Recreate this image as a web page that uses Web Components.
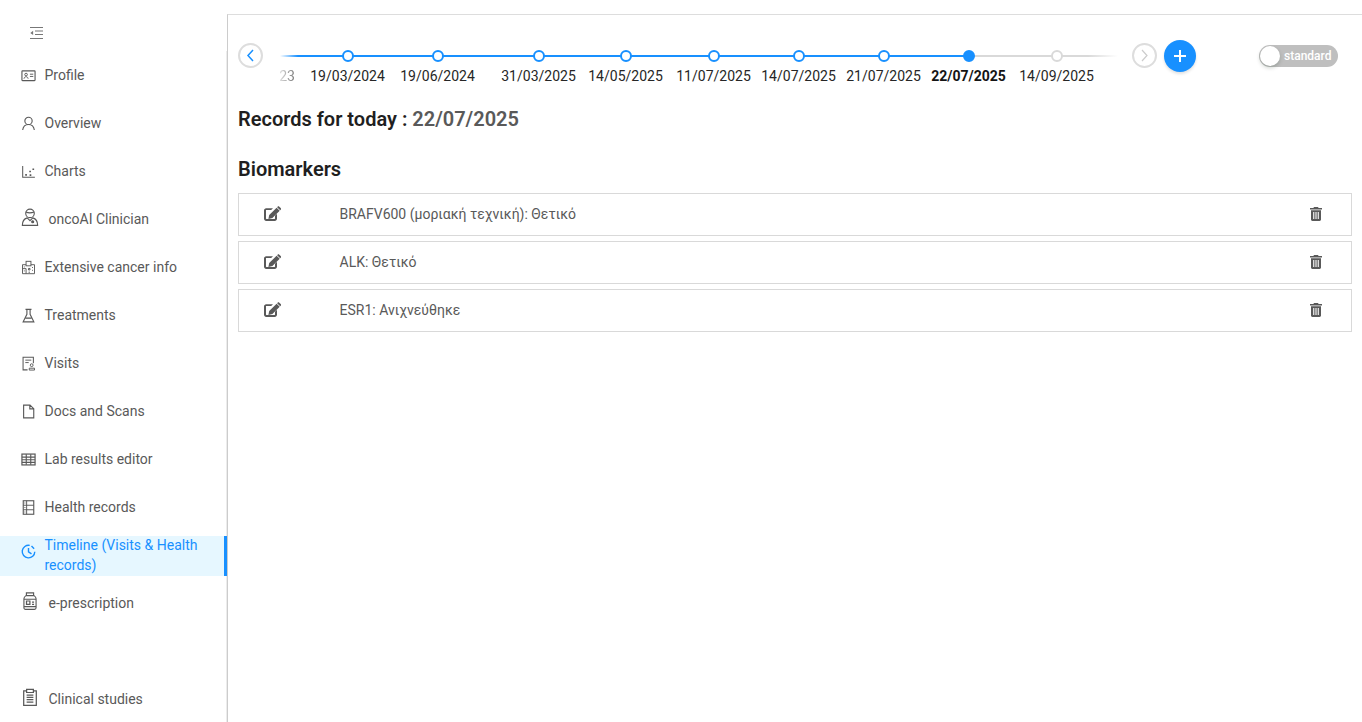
<!DOCTYPE html>
<html>
<head>
<meta charset="utf-8">
<title>Timeline</title>
<style>
  html, body { margin: 0; height: 100%; background: #fff; font-family: Roboto, "Noto Sans", sans-serif; }
</style>
</head>
<body>
<app-shell>
  <side-nav slot="side">
    <nav-item icon="profile" label="Profile"></nav-item>
    <nav-item icon="user" label="Overview"></nav-item>
    <nav-item icon="chart" label="Charts"></nav-item>
    <nav-item icon="doctor" label="oncoAI Clinician" wide></nav-item>
    <nav-item icon="cancer" label="Extensive cancer info"></nav-item>
    <nav-item icon="flask" label="Treatments"></nav-item>
    <nav-item icon="visit" label="Visits"></nav-item>
    <nav-item icon="file" label="Docs and Scans"></nav-item>
    <nav-item icon="table" label="Lab results editor"></nav-item>
    <nav-item icon="records" label="Health records"></nav-item>
    <nav-item icon="clock" label="Timeline (Visits &amp; Health records)" active></nav-item>
    <nav-item icon="jar" label="e-prescription" wide></nav-item>
    <nav-item icon="clip" label="Clinical studies" wide class="gap"></nav-item>
  </side-nav>
  <date-timeline>
    <time-stop date="23" kind="cut"></time-stop>
    <time-stop date="19/03/2024" left="16"></time-stop>
    <time-stop date="19/06/2024" left="15"></time-stop>
    <time-stop date="31/03/2025" left="26"></time-stop>
    <time-stop date="14/05/2025" left="12"></time-stop>
    <time-stop date="11/07/2025" left="13"></time-stop>
    <time-stop date="14/07/2025" left="10"></time-stop>
    <time-stop date="21/07/2025" left="10"></time-stop>
    <time-stop date="22/07/2025" left="10" kind="current"></time-stop>
    <time-stop date="14/09/2025" left="13" kind="future"></time-stop>
  </date-timeline>
  <records-head date="22/07/2025"></records-head>
  <section-title>Biomarkers</section-title>
  <record-row>BRAFV600 (μοριακή τεχνική): Θετικό</record-row>
  <record-row>ALK: Θετικό</record-row>
  <record-row>ESR1: Ανιχνεύθηκε</record-row>
</app-shell>

<script>
// all the sidebar icons, 16x16 box
const ICONS = {
  profile: '<rect x="1" y="3" width="14" height="10.5" rx=".6" stroke-width="1.2"/><circle cx="5.4" cy="7" r="1.4"/><path d="M3.200 11.400c.3-1.500 1.200-2.100 2.200-2.100s1.900.6 2.200 2.100M9.500 6.600h3.600M9.500 9h3.600"/>',
  user: '<circle cx="8" cy="5.200" r="3.900" stroke-width="1.200"/><path stroke-width="1.200" d="M1.800 15c.4-3.600 3-6 6.200-6s5.800 2.400 6.200 6"/>',
  chart: '<path d="M1.800 2v12.200h13" stroke-width="1.100"/><path stroke-width="1.800" stroke-dasharray="1.800 2.400" d="M4.500 11.600h3M9.200 11.800h3.200M8.800 8h1.800M12.200 5.600h1.800"/>',
  doctor: '<circle cx="8" cy="4.800" r="3.800"/><path d="M4.300 3.600c2.200 1 5 .9 7.400 0M1.200 15.400c0-3.800 1.800-5.800 4.300-6.600l2.500 2.500 2.500-2.500c2.500.8 4.300 2.800 4.300 6.600z"/><circle cx="10.400" cy="12.200" r=".9" fill="currentColor"/>',
  cancer: '<path d="M5.400 5H1.600v9.600h12.800V5H10.600"/><rect x="5.400" y="1.400" width="5.200" height="4.800"/><path d="M5.400 14.600V9.200H1.600M3 11.600h1M3 7.400h1M8 9h1.600v1.600H8zM11.800 8h1M11.800 11h1M8 13h1.600"/>',
  flask: '<path stroke-width="1.200" d="M4.800 1.500h6.400M6.300 1.500v5.200L2.300 14.800h11.400L9.700 6.700V1.500"/><path stroke-width="1.400" d="M4.600 10.800h6.800"/>',
  visit: '<path stroke-width="1.100" d="M7 14.800H2.200V1.400h11v6.200"/><path d="M4.600 4.400h6.400M4.600 7h3.600"/><circle cx="11.400" cy="9.800" r="1.500"/><path d="M8.800 15v-2h5.600v2z"/>',
  file: '<path stroke-width="1.200" d="M2.800 1.200h6.800L13.600 5v9.800H2.800zM9.400 1.400v3.800h4"/>',
  table: '<rect x="1" y="2.200" width="14" height="11.600" stroke-width="1.300"/><path stroke-width="1.200" d="M1 5.400h14M1 8.200h14M1 11h14M5.600 2.400v11.200M10.400 2.400v11.200"/>',
  records: '<rect x="2.400" y=".8" width="11.200" height="14.400" stroke-width="1.200"/><path stroke-width="1" d="M2.400 5.600h11.200M2.400 10.400h11.200M6 .8v14.400"/><path stroke-width="1.200" d="M3.700 3.200h1M3.700 8h1M3.700 12.800h1"/>',
  clock: '<path stroke-width="1.500" d="M9.300 1.500A6.700 6.700 0 1 0 14.700 8.200"/><path stroke-width="1.500" d="M8 4.200V8.400l3.200 2.200M11.200 2.200l2.800 2.800"/>',
  jar: '<path d="M4.800 .8h6.400v2.400H4.800zM4.400 3.200h7.200c1.100.7 1.800 1.700 1.800 2.800v8c0 .8-.6 1.400-1.400 1.400H4c-.8 0-1.400-.6-1.400-1.400V6c0-1.100.7-2.100 1.800-2.800zM2.600 6.400h10.800M2.600 13h10.800"/><path stroke-width="1.100" d="M4.900 8h3v3h-3zM9.800 9h1.800M9.800 11h1.800"/>',
  clip: '<path stroke-width="1.100" d="M5 2.600H2.400V15.400H13.600V2.600H11"/><path stroke-width="1.100" d="M5 1.200h6v2.800H5zM5 6.400h6M5 8.400h6M5 10.400h6M5 12.600h6"/>'
};

class AppShell extends HTMLElement {
  constructor() {
    super();
    this.attachShadow({ mode: 'open' }).innerHTML = `
      <style>
        :host { display: grid; grid-template-columns: 227px 1fr; height: 722px; overflow: hidden; }
        main { margin-top: 14px; border-top: 1px solid #ddd; border-left: 1px solid #ccc; padding: 25px 10px 0; min-width: 0; }
      </style>
      <slot name="side"></slot>
      <main><slot></slot></main>`;
  }
}

class SideNav extends HTMLElement {
  constructor() {
    super();
    this.attachShadow({ mode: 'open' }).innerHTML = `
      <style>
        /* faint edge of the menu, it only starts below the fold button */
        :host { display: flex; flex-direction: column; background: linear-gradient(#ececec, #ececec) right 51px / 1px 100% no-repeat; }
        .fold { height: 55px; padding: 26px 0 0 29px; box-sizing: border-box; color: #777; }
        .fold svg { display: block; width: 15px; height: 14px; }
      </style>
      <div class="fold">
        <svg viewBox="0 0 14 14" fill="none" stroke="currentColor" stroke-width="1.200">
          <path d="M.5 1.500h13M5.500 5h8M5.500 8.500h8M.5 12.500h13"/>
          <path d="M3.600 4.800v4.200L.8 7z" fill="currentColor" stroke="none"/>
        </svg>
      </div>
      <slot></slot>`;
  }
}

class NavItem extends HTMLElement {
  constructor() {
    super();
    this.attachShadow({ mode: 'open' }).innerHTML = `
      <style>
        :host { display: flex; align-items: center; height: 40px; margin-bottom: 8px; padding: 0 24px 0 21px; box-sizing: border-box;
                font: 14px/20px Roboto, sans-serif; color: #595959; }
        :host([active]) { background: #e6f7ff; color: #1890ff; border-right: 3px solid #1890ff; margin: 1px 0 7px; padding-right: 21px; }
        :host([active]) span { margin-top: -2px; }
        :host(.gap) { margin-top: 48px; }
        svg { flex: none; width: 15px; height: 15px; margin-right: 8.500px; }
        :host([wide]) svg { width: 18px; height: 18px; margin-right: 9.500px; margin-top: -4px; }
        :host([active]) svg { margin-top: -9px; }
      </style>
      <svg viewBox="0 0 16 16" fill="none" stroke="currentColor" stroke-width="1"></svg>
      <span></span>`;
  }
  connectedCallback() {
    this.shadowRoot.querySelector('svg').innerHTML = ICONS[this.getAttribute('icon')] || '';
    this.shadowRoot.querySelector('span').textContent = this.getAttribute('label');
  }
}

class DateTimeline extends HTMLElement {
  constructor() {
    super();
    this.attachShadow({ mode: 'open' }).innerHTML = `
      <style>
        :host { display: flex; align-items: flex-start; height: 64px; }
        .arrow { flex: none; width: 25px; height: 25px; box-sizing: border-box; border: 2px solid #ddd; border-radius: 50%; margin-top: 3px; display: flex; align-items: center; justify-content: center; color: #1890ff; }
        .arrow.off { color: #ccc; margin-left: 14px; }
        .arrow svg { width: 9px; height: 13px; }
        .track { position: relative; flex: none; width: 838px; margin-left: 17px; display: flex; overflow: hidden; }
        /* line sits under the dots */
        .line { position: absolute; left: 0; right: 0; top: 15px; height: 2px;
                background: linear-gradient(90deg, rgba(24,144,255,0) 0, #1890ff 18px, #1890ff 689px, #d9d9d9 689px, #d9d9d9 808px, rgba(217,217,217,0) 838px); }
        .add { flex: none; width: 32px; height: 32px; border-radius: 50%; background: #1890ff; margin-left: 7px; display: flex; align-items: center; justify-content: center; box-shadow: 0 2px 3px rgba(0,0,0,.12); }
        .add svg { width: 12px; height: 12px; }
        .switch { flex: none; margin: 5px 0 0 63px; width: 79px; height: 22px; border-radius: 11px; background: #bfbfbf; position: relative; color: #fff; font: 500 12px/22px Roboto, sans-serif; padding-left: 25px; box-sizing: border-box; }
        .switch i { position: absolute; left: 1px; top: 1px; width: 20px; height: 20px; border-radius: 50%; background: #fff; box-shadow: 0 2px 4px rgba(0,35,11,.2); }
      </style>
      <div class="arrow"><svg viewBox="0 0 9 13" fill="none" stroke="currentColor" stroke-width="1.500"><path d="M7 1 2 6.500 7 12"/></svg></div>
      <div class="track"><div class="line"></div><slot></slot></div>
      <div class="arrow off"><svg viewBox="0 0 9 13" fill="none" stroke="currentColor" stroke-width="1.200"><path d="M2 1l5 5.500L2 12"/></svg></div>
      <div class="add"><svg viewBox="0 0 12 12" fill="none" stroke="#fff" stroke-width="2"><path d="M6 0v12M0 6h12"/></svg></div>
      <div class="switch"><i></i>standard</div>`;
  }
}

class TimeStop extends HTMLElement {
  constructor() {
    super();
    this.attachShadow({ mode: 'open' }).innerHTML = `
      <style>
        :host { display: flex; flex-direction: column; align-items: center; flex: none; width: 75px; position: relative; font: 14px/20px Roboto, sans-serif; color: #262626; }
        .dot { width: 12px; height: 12px; box-sizing: border-box; margin-top: 10px; border: 2px solid #1890ff; border-radius: 50%; background: #fff; }
        .lab { margin-top: 4px; white-space: nowrap; }
        :host([kind=current]) { font-weight: 700; color: #141414; }
        :host([kind=current]) .dot { background: #1890ff; }
        :host([kind=future]) .dot { border-color: #d9d9d9; }
        :host([kind=cut]) { width: 14px; color: #777; }
        :host([kind=cut]) .dot { visibility: hidden; }
        :host([kind=cut]) .lab { -webkit-mask-image: linear-gradient(90deg, rgba(0,0,0,.2), #000); mask-image: linear-gradient(90deg, rgba(0,0,0,.2), #000); }
      </style>
      <div class="dot"></div>
      <div class="lab"></div>`;
  }
  connectedCallback() {
    this.shadowRoot.querySelector('.lab').textContent = this.getAttribute('date');
    this.style.marginLeft = (this.getAttribute('left') || 0) + 'px';
  }
}

class RecordsHead extends HTMLElement {
  constructor() {
    super();
    this.attachShadow({ mode: 'open' }).innerHTML = `
      <style>
        :host { display: block; font: 600 20px/28px Roboto, sans-serif; color: #1f1f1f; margin-top: 1px; }
        span { color: #595959; }
      </style>
      Records for today : <span></span>`;
  }
  connectedCallback() {
    this.shadowRoot.querySelector('span').textContent = this.getAttribute('date');
  }
}

class SectionTitle extends HTMLElement {
  constructor() {
    super();
    this.attachShadow({ mode: 'open' }).innerHTML = `
      <style>
        :host { display: block; font: 600 20px/28px Roboto, sans-serif; color: #1f1f1f; margin: 22px 0 10px; }
      </style>
      <slot></slot>`;
  }
}

class RecordRow extends HTMLElement {
  constructor() {
    super();
    this.attachShadow({ mode: 'open' }).innerHTML = `
      <style>
        :host { display: flex; align-items: center; height: 43px; box-sizing: border-box; border: 1px solid #d9d9d9; padding-bottom: 2px; margin-bottom: 5px;
                font: 14px/20px Roboto, sans-serif; color: #595959; }
        .edit { flex: none; width: 17px; height: 15px; margin: 0 58.500px 0 25px; }
        .text { flex: 1; }
        .bin { flex: none; width: 12px; height: 14px; margin-right: 29px; }
      </style>
      <svg class="edit" viewBox="0 0 17 15" fill="#595959">
        <path d="M2.200 2.200H9L7.200 4.100H2.400c-.3 0-.4.100-.4.400v8.100c0 .3.100.4.400.4h8.200c.3 0 .4-.1.400-.4V9.800l2-2v5c0 1.200-1 2.200-2.200 2.200H2.200C1 15 0 14 0 12.800V4.400c0-1.200 1-2.200 2.200-2.200z"/>
        <path d="M12.600 1.700l3.100 3.100-7.300 7.300-4 .8.800-4zM13.600.7c.5-.5 1.200-.5 1.700 0l1.400 1.400c.5.5.5 1.200 0 1.700l-.5.5-3.100-3.100z"/>
      </svg>
      <div class="text"><slot></slot></div>
      <svg class="bin" viewBox="0 0 12 14" fill="#595959">
        <path d="M4 0h4l.6 1H12v1.500H0V1h3.400z"/>
        <path fill-rule="evenodd" d="M1 3.300h10V12.600c0 .8-.6 1.400-1.400 1.400H2.400C1.600 14 1 13.400 1 12.600zM3.200 5v7h1.100V5zM5.450 5v7h1.100V5zM7.700 5v7h1.100V5z"/>
      </svg>`;
  }
}

customElements.define('app-shell', AppShell);
customElements.define('side-nav', SideNav);
customElements.define('nav-item', NavItem);
customElements.define('date-timeline', DateTimeline);
customElements.define('time-stop', TimeStop);
customElements.define('records-head', RecordsHead);
customElements.define('section-title', SectionTitle);
customElements.define('record-row', RecordRow);
</script>
</body>
</html>
